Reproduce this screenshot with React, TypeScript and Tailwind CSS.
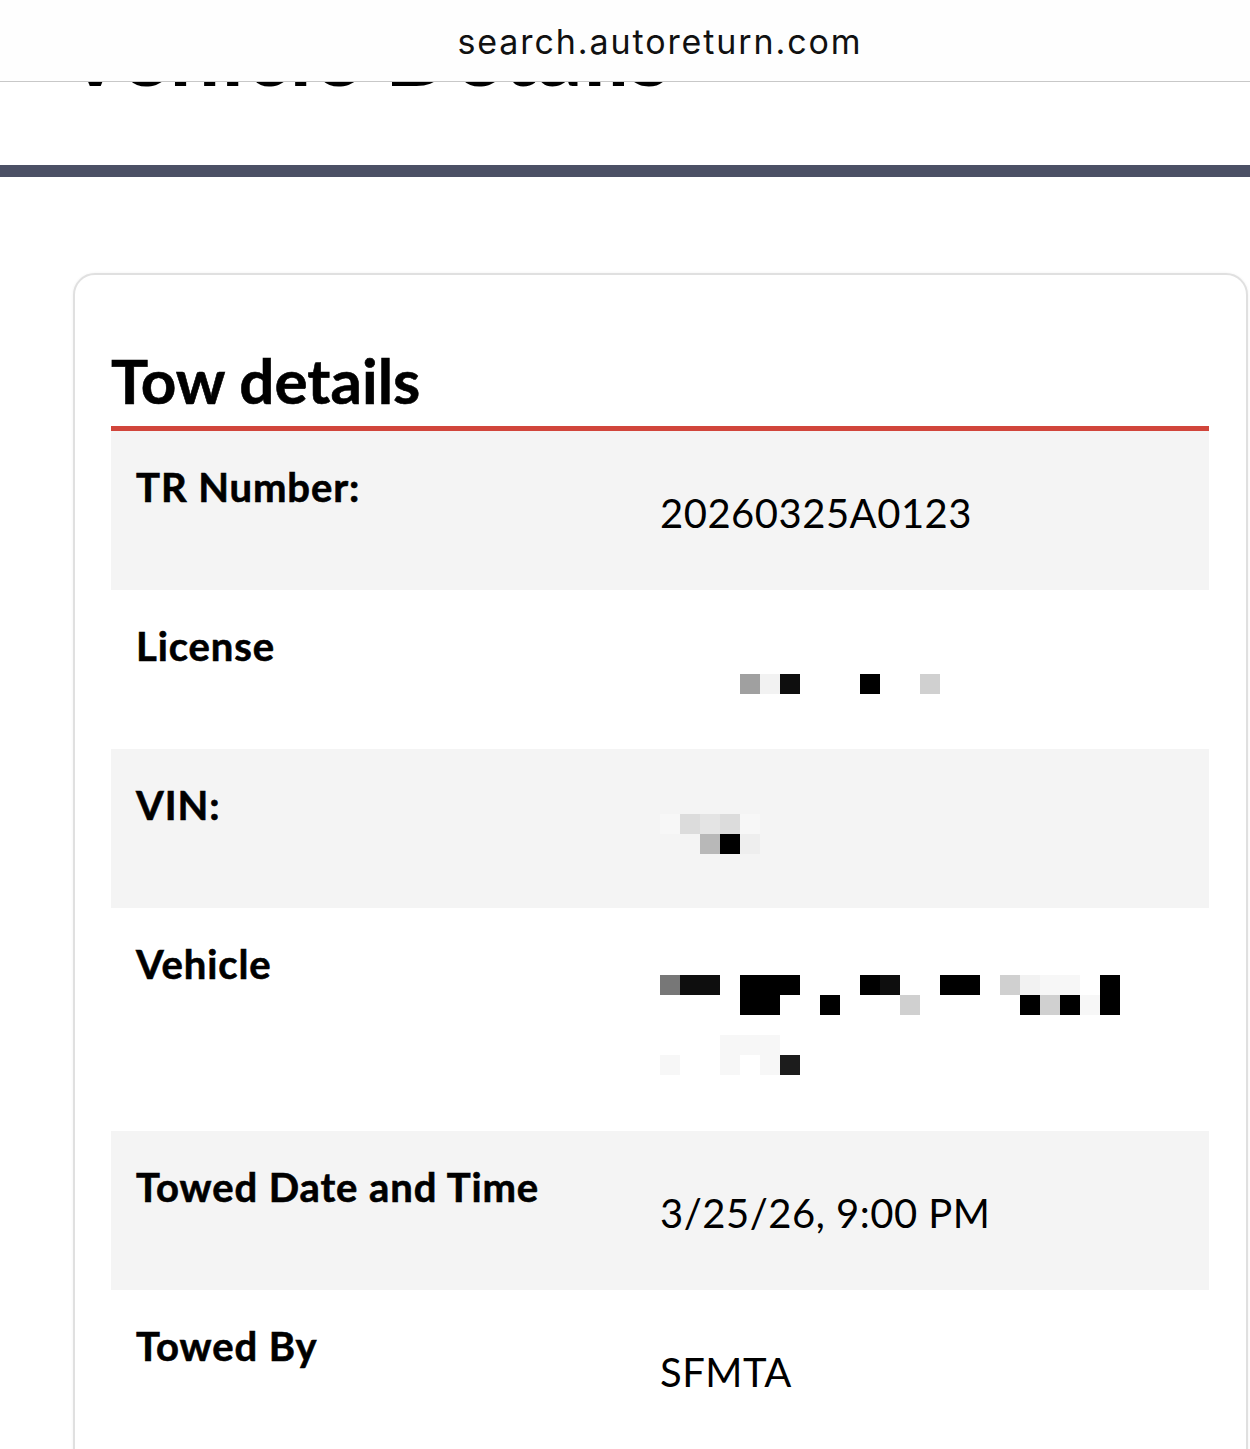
import React from 'react';

// redaction pixel shades, 20px cells
const SHADE: Record<string, string> = {
  '.': 'bg-transparent',
  '0': 'bg-black',
  '1': 'bg-[#0e0e0e]',
  k: 'bg-[#1c1c1c]',
  g: 'bg-[#777777]',
  a: 'bg-[#a0a0a0]',
  b: 'bg-[#b8b8b8]',
  c: 'bg-[#d0d0d0]',
  d: 'bg-[#dcdcdc]',
  e: 'bg-[#e4e4e4]',
  h: 'bg-[#eeeeee]',
  f: 'bg-[#f2f2f2]',
  w: 'bg-[#f7f7f7]',
};

function Pixels({ rows, className }: { rows: string[]; className: string }) {
  return (
    <div className={className}>
      {rows.map((r, i) => (
        <div key={i} className="flex h-[20px]">
          {r.split('').map((ch, j) => (
            <div key={j} className={`w-[20px] h-[20px] ${SHADE[ch]}`} />
          ))}
        </div>
      ))}
    </div>
  );
}

type Row = { label: string; value: React.ReactNode };

const ROWS: Row[] = [
  { label: 'TR Number:', value: <div className="h-[60px]">20260325A0123</div> },
  { label: 'License', value: <Pixels className="h-[60px] pt-[32px]" rows={['....af1...0..c']} /> },
  { label: 'VIN:', value: <Pixels className="h-[60px] pt-[13px]" rows={['wdedw', '..b0h']} /> },
  {
    label: 'Vehicle',
    value: (
      <Pixels
        className="h-[124px] pt-[15px]"
        rows={['g11.000...01..00.cfww.0', '....00..0...c.....0c0w0', '', '...www', 'w..w.wk']}
      />
    ),
  },
  { label: 'Towed Date and Time', value: <div className="h-[60px]">3/25/26, 9:00 PM</div> },
  { label: 'Towed By', value: <div className="h-[60px]">SFMTA</div> },
];

export default function App() {
  return (
    <div className="relative min-h-screen bg-white text-black font-['Lato',sans-serif] overflow-hidden">
      {/* browser address bar, lies over the page */}
      <div className="absolute top-0 inset-x-0 z-10 h-[82px] bg-[#fefefe] border-b border-[#c8c8c8] flex justify-center pl-[70px] pt-[22px]">
        <span className="font-['Inter',sans-serif] text-[34px] leading-[40px] text-[#111] tracking-[1.9px]">
          search.autoreturn.com
        </span>
      </div>

      <h1 className="pt-[6px] pl-[64px] text-[90px] leading-none font-bold tracking-[1px]">Vehicle Details</h1>
      <div className="mt-[69px] h-[12px] bg-[#4b5065]" />

      <div className="mt-[96px] ml-[73px] mr-[2px] rounded-[22px] border-2 border-[#e0e0e0] bg-white shadow-[0_0_3px_rgba(0,0,0,0.06)] pl-[36px] pr-[37px] pt-[69px] pb-10">
        <h2 className="text-[62px] leading-[72px] font-bold [-webkit-text-stroke:0.6px_black]">Tow details</h2>
        <div className="mt-[10px] border-t-[5px] border-[#d1453b]">
          {ROWS.map((r, i) => (
            <div key={r.label} className={`grid grid-cols-2 ${i % 2 === 0 ? 'bg-[#f4f4f4]' : 'bg-white'}`}>
              <div className="pl-[25px] pt-[26px] text-[40px] leading-[60px] font-bold tracking-[0.9px] [-webkit-text-stroke:0.6px_black]">
                {r.label}
              </div>
              <div className="pt-[52px] pb-[47px] text-[40px] leading-[60px] tracking-[0.5px]">{r.value}</div>
            </div>
          ))}
        </div>
      </div>
    </div>
  );
}
